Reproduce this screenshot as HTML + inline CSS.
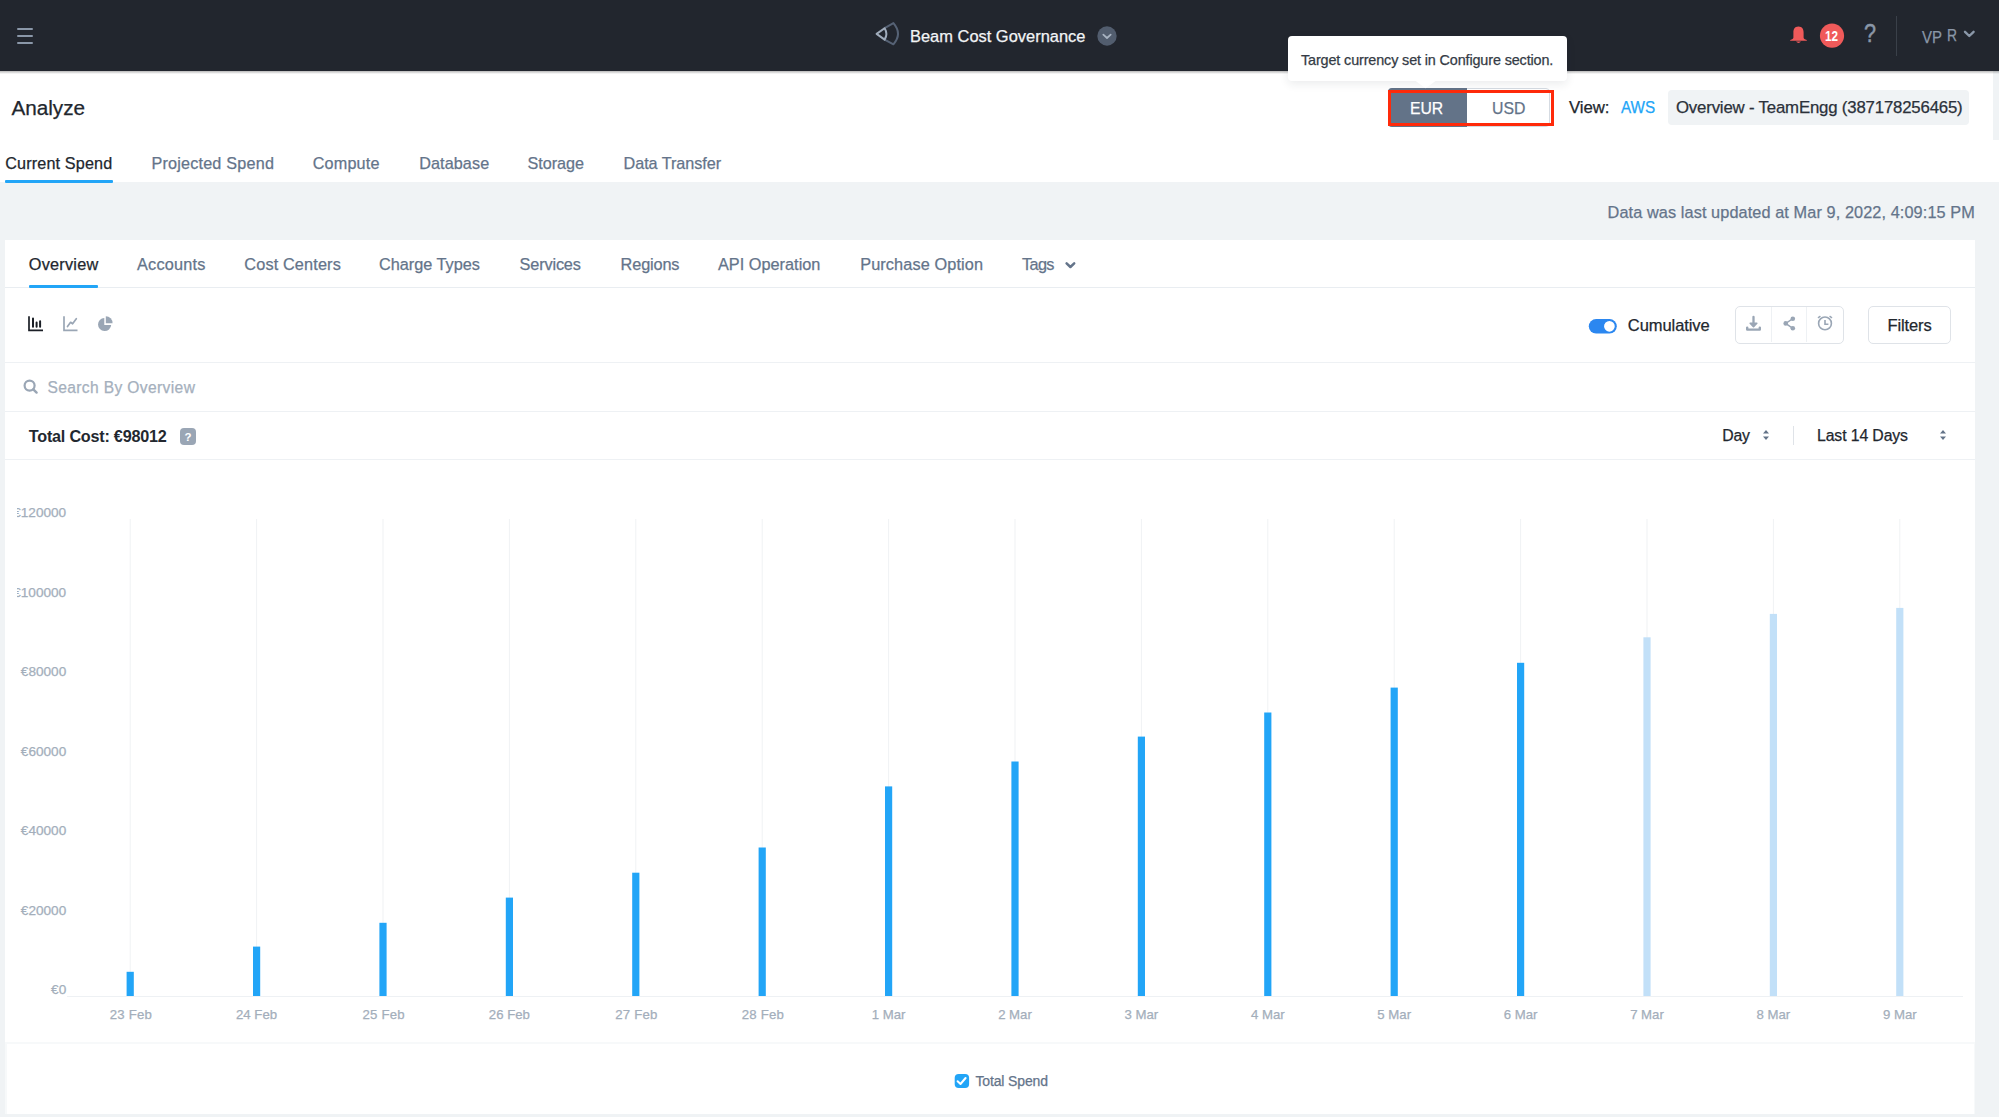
<!DOCTYPE html><html><head><meta charset="utf-8"><style>
html,body{margin:0;padding:0;}
body{width:1999px;height:1117px;overflow:hidden;position:relative;background:#f0f3f5;font-family:"Liberation Sans",sans-serif;}
.t{position:absolute;white-space:nowrap;-webkit-text-stroke:0.25px currentColor;}
.b{position:absolute;}
svg{position:absolute;overflow:visible;}
</style></head><body>
<div class="b" style="left:0px;top:0px;width:1999px;height:71px;background:#22262e;"></div>
<div class="b" style="left:17px;top:27.6px;width:16px;height:2px;background:#8a97a8;border-radius:1px;"></div>
<div class="b" style="left:17px;top:34.7px;width:16px;height:2px;background:#8a97a8;border-radius:1px;"></div>
<div class="b" style="left:17px;top:42px;width:16px;height:2px;background:#8a97a8;border-radius:1px;"></div>
<svg style="left:870px;top:18px" width="35" height="32" viewBox="0 0 35 32">
<path d="M14.6 10.2 L23.4 5.1 Q32.6 15.7 23.4 26.3 L14.6 21.6" fill="none" stroke="#566275" stroke-width="2" stroke-linejoin="round" stroke-linecap="round"/>
<path d="M6.6 15.9 L14.6 10.2 Q18.2 15.9 14.6 21.6 Z" fill="none" stroke="#a0acbb" stroke-width="2" stroke-linejoin="round"/>
</svg>
<div class="t" style="left:910.00px;top:28.07px;font-size:16.46px;line-height:16.46px;color:#f2f4f6;">Beam Cost Governance</div>
<svg style="left:1097px;top:26px" width="20" height="20" viewBox="0 0 20 20">
<circle cx="10" cy="10" r="9.7" fill="#525d6e"/>
<path d="M6.3 8.6 L10 12 L13.7 8.6" fill="none" stroke="#a9b4c2" stroke-width="1.7" stroke-linecap="round" stroke-linejoin="round"/>
</svg>
<svg style="left:1789px;top:26px" width="19" height="19" viewBox="0 0 19 19">
<path d="M9.4 0.6 C5.6 0.6 4.4 3.6 4.4 6.5 L4.4 11.6 Q4.4 13.4 1.2 13.9 L1.2 14.8 L17.8 14.8 L17.8 13.9 Q14.6 13.4 14.6 11.6 L14.6 6.5 C14.6 3.6 13.3 0.6 9.4 0.6 Z" fill="#f05a5a"/>
<path d="M7 15.6 Q9.5 18.2 12 15.6 Z" fill="#f05a5a"/>
</svg>
<svg style="left:1819px;top:23px" width="26" height="26" viewBox="0 0 26 26">
<circle cx="13" cy="12.7" r="12.1" fill="#f05a5a"/></svg>
<div class="t" style="left:1824.80px;top:30.22px;font-size:13.91px;line-height:13.91px;color:#ffffff;font-weight:bold;-webkit-text-stroke:0;transform:scaleX(0.8418);transform-origin:0.00px 0;">12</div>
<div class="t" style="left:1864.00px;top:21.03px;font-size:25.36px;line-height:25.36px;color:#8a97a8;-webkit-text-stroke:0.5px #8a97a8;transform:scaleX(0.8525);transform-origin:0.00px 0;">?</div>
<div class="b" style="left:1896px;top:16px;width:1px;height:40px;background:#3a4049;"></div>
<div class="t" style="left:1921.80px;top:29.57px;font-size:16.81px;line-height:16.81px;color:#8a97a8;transform:scaleX(0.8911);transform-origin:0.00px 0;">VP</div>
<div class="t" style="left:1946.50px;top:28.37px;font-size:16.81px;line-height:16.81px;color:#8a97a8;transform:scaleX(0.8261);transform-origin:0.00px 0;">R</div>
<svg style="left:1963px;top:30px" width="13" height="8" viewBox="0 0 13 8">
<path d="M2 1.8 L6.3 6 L10.6 1.8" fill="none" stroke="#8a97a8" stroke-width="2.4" stroke-linecap="round" stroke-linejoin="round"/></svg>
<div class="b" style="left:0px;top:71px;width:1999px;height:111px;background:#ffffff;"></div>
<div class="b" style="left:1993px;top:71px;width:6px;height:69px;background:#f0f3f5;"></div>
<div class="b" style="left:0px;top:71px;width:1999px;height:2.5px;background:linear-gradient(rgba(0,0,0,0.28),rgba(0,0,0,0));"></div>
<div class="t" style="left:11.40px;top:98.45px;font-size:20.73px;line-height:20.73px;color:#22272e;">Analyze</div>
<div class="t" style="left:5.30px;top:154.99px;font-size:16.20px;line-height:16.20px;color:#22272e;letter-spacing:0.135px;">Current Spend</div>
<div class="t" style="left:151.40px;top:154.99px;font-size:16.20px;line-height:16.20px;color:#64748a;letter-spacing:0.200px;">Projected Spend</div>
<div class="t" style="left:312.70px;top:154.99px;font-size:16.20px;line-height:16.20px;color:#64748a;letter-spacing:0.188px;">Compute</div>
<div class="t" style="left:419.20px;top:154.99px;font-size:16.20px;line-height:16.20px;color:#64748a;letter-spacing:0.095px;">Database</div>
<div class="t" style="left:527.40px;top:154.99px;font-size:16.20px;line-height:16.20px;color:#64748a;">Storage</div>
<div class="t" style="left:623.50px;top:154.99px;font-size:16.20px;line-height:16.20px;color:#64748a;letter-spacing:-0.031px;">Data Transfer</div>
<div class="b" style="left:5px;top:180px;width:108px;height:2.5px;background:#22a5f7;border-radius:1px;"></div>
<div class="b" style="left:1388px;top:87.5px;width:161.5px;height:39.5px;background:#ffffff;border:1px solid #d5dbe2;border-radius:4px;box-sizing:border-box;"></div>
<div class="b" style="left:1388px;top:87.5px;width:79px;height:39.5px;background:#637388;border-radius:4px 0 0 4px;"></div>
<div class="t" style="left:1410.30px;top:99.94px;font-size:16.38px;line-height:16.38px;color:#ffffff;transform:scaleX(0.9608);transform-origin:0.00px 0;">EUR</div>
<div class="t" style="left:1491.60px;top:100.44px;font-size:16.38px;line-height:16.38px;color:#637388;transform:scaleX(0.9666);transform-origin:0.00px 0;">USD</div>
<div class="b" style="left:1388px;top:90px;width:165.5px;height:36px;background:transparent;border:3px solid #ff2a0a;box-sizing:border-box;"></div>
<div class="t" style="left:1569.00px;top:99.78px;font-size:16.80px;line-height:16.80px;color:#22272e;letter-spacing:-0.060px;">View:</div>
<div class="t" style="left:1621.40px;top:99.26px;font-size:16.23px;line-height:16.23px;color:#22a5f7;transform:scaleX(0.9406);transform-origin:0.00px 0;">AWS</div>
<div class="b" style="left:1668.4px;top:90px;width:300.6px;height:34.5px;background:#f0f3f5;border-radius:4px;"></div>
<div class="t" style="left:1676.00px;top:99.78px;font-size:16.80px;line-height:16.80px;color:#2b313a;letter-spacing:-0.179px;">Overview - TeamEngg (387178256465)</div>
<div class="b" style="left:1287.5px;top:36px;width:279px;height:45px;background:#ffffff;border-radius:4px;box-shadow:0 3px 10px rgba(30,40,55,0.09);"></div>
<svg style="left:1415px;top:80px" width="22" height="10" viewBox="0 0 22 10">
<path d="M0 0.5 L10.6 8.2 L21.2 0.5 Z" fill="#ffffff"/></svg>
<div class="t" style="left:1301.00px;top:52.61px;font-size:14.40px;line-height:14.40px;color:#343b45;letter-spacing:-0.131px;">Target currency set in Configure section.</div>
<div class="t" style="left:1607.60px;top:204.30px;font-size:16.30px;line-height:16.30px;color:#64748a;letter-spacing:0.091px;">Data was last updated at Mar 9, 2022, 4:09:15 PM</div>
<div class="b" style="left:5px;top:240px;width:1970px;height:874px;background:#ffffff;"></div>
<div class="t" style="left:28.80px;top:256.20px;font-size:16.30px;line-height:16.30px;color:#22272e;letter-spacing:0.218px;">Overview</div>
<div class="t" style="left:137.00px;top:256.20px;font-size:16.30px;line-height:16.30px;color:#64748a;letter-spacing:0.204px;">Accounts</div>
<div class="t" style="left:244.30px;top:256.20px;font-size:16.30px;line-height:16.30px;color:#64748a;letter-spacing:0.135px;">Cost Centers</div>
<div class="t" style="left:378.90px;top:256.20px;font-size:16.30px;line-height:16.30px;color:#64748a;">Charge Types</div>
<div class="t" style="left:519.60px;top:256.20px;font-size:16.30px;line-height:16.30px;color:#64748a;letter-spacing:-0.159px;">Services</div>
<div class="t" style="left:620.60px;top:256.20px;font-size:16.30px;line-height:16.30px;color:#64748a;letter-spacing:-0.137px;">Regions</div>
<div class="t" style="left:718.00px;top:256.20px;font-size:16.30px;line-height:16.30px;color:#64748a;letter-spacing:0.011px;">API Operation</div>
<div class="t" style="left:860.20px;top:256.20px;font-size:16.30px;line-height:16.30px;color:#64748a;letter-spacing:0.112px;">Purchase Option</div>
<div class="t" style="left:1021.90px;top:256.20px;font-size:16.30px;line-height:16.30px;color:#64748a;letter-spacing:-0.598px;">Tags</div>
<svg style="left:1064px;top:260px" width="13" height="9" viewBox="0 0 13 9">
<path d="M2.6 3.3 L6.4 7 L10.2 3.3" fill="none" stroke="#64748a" stroke-width="2.5" stroke-linecap="round" stroke-linejoin="round"/></svg>
<div class="b" style="left:5px;top:287px;width:1970px;height:1px;background:#e9edf1;"></div>
<div class="b" style="left:28.8px;top:285px;width:69.5px;height:2.5px;background:#22a5f7;border-radius:1px;"></div>
<svg style="left:28px;top:316px" width="16" height="16" viewBox="0 0 16 16">
<path d="M1 0.3 V14.4 H15" fill="none" stroke="#1b1f26" stroke-width="1.7"/>
<path d="M5 2.6 V10.8 M8.6 6.6 V10.8 M12.1 5.2 V10.8" stroke="#1b1f26" stroke-width="2" stroke-linecap="round"/>
</svg>
<svg style="left:63px;top:316px" width="16" height="16" viewBox="0 0 16 16">
<path d="M1 0.3 V14.4 H14.5" fill="none" stroke="#9aa6b5" stroke-width="1.7"/>
<path d="M4.5 10.5 L7.6 6.3 L9.6 7.8 L13.3 2.7" fill="none" stroke="#9aa6b5" stroke-width="1.7" stroke-linecap="round" stroke-linejoin="round"/>
</svg>
<svg style="left:97.6px;top:316px" width="16" height="16" viewBox="0 0 16 16">
<path d="M6.3 1.9 A6.6 6.6 0 1 0 13.2 9 L6.3 9 Z" fill="#9aa6b5"/>
<path d="M7.8 0.2 A6.9 6.9 0 0 1 14.5 7.3 L7.8 7.3 Z" fill="#9aa6b5"/>
</svg>
<svg style="left:1588px;top:318px" width="30" height="17" viewBox="0 0 30 17">
<rect x="0.8" y="1" width="28" height="14.6" rx="7.3" fill="#2b87f0"/>
<circle cx="21.4" cy="8.3" r="6" fill="#ffffff" stroke="#2b87f0" stroke-width="1.3"/>
</svg>
<div class="t" style="left:1627.80px;top:317.03px;font-size:16.50px;line-height:16.50px;color:#22272e;letter-spacing:-0.067px;">Cumulative</div>
<div class="b" style="left:1734.7px;top:305.5px;width:109.3px;height:38px;background:#ffffff;border:1.5px solid #dfe3e8;border-radius:5px;box-sizing:border-box;"></div>
<div class="b" style="left:1770.5px;top:307px;width:1.2px;height:35px;background:#eef1f4;"></div>
<div class="b" style="left:1806.3px;top:307px;width:1.2px;height:35px;background:#eef1f4;"></div>
<svg style="left:1744px;top:314px" width="20" height="20" viewBox="0 0 20 20">
<path d="M9.5 3 V11.5" stroke="#9aa6b5" stroke-width="2.3" stroke-linecap="round"/>
<path d="M6.2 9.2 L9.5 12.6 L12.8 9.2 Z" fill="#9aa6b5" stroke="#9aa6b5" stroke-width="1.6" stroke-linecap="round" stroke-linejoin="round"/>
<path d="M3.2 13.6 V15.6 H15.8 V13.6" fill="none" stroke="#9aa6b5" stroke-width="2.4" stroke-linecap="round" stroke-linejoin="round"/>
</svg>
<svg style="left:1780px;top:313px" width="20" height="20" viewBox="0 0 20 20">
<path d="M12.8 5.7 L5.7 10.4 L12.8 15.3" fill="none" stroke="#9aa6b5" stroke-width="1.4"/>
<circle cx="12.8" cy="5.7" r="2.3" fill="#9aa6b5"/><circle cx="5.7" cy="10.4" r="2.3" fill="#9aa6b5"/><circle cx="12.8" cy="15.3" r="2.3" fill="#9aa6b5"/>
</svg>
<svg style="left:1815px;top:313px" width="20" height="20" viewBox="0 0 20 20">
<circle cx="10" cy="10.4" r="6.4" fill="none" stroke="#9aa6b5" stroke-width="1.6"/>
<path d="M10 7 V11.2 H13.4" fill="none" stroke="#9aa6b5" stroke-width="1.6"/>
<path d="M3.4 4.6 L5 3.4 M16.6 4.6 L15 3.4" stroke="#9aa6b5" stroke-width="1.4" stroke-linecap="round"/>
</svg>
<div class="b" style="left:1868.3px;top:305.5px;width:82.5px;height:38px;background:#ffffff;border:1.5px solid #dfe3e8;border-radius:5px;box-sizing:border-box;"></div>
<div class="t" style="left:1887.60px;top:317.03px;font-size:16.50px;line-height:16.50px;color:#22272e;letter-spacing:-0.130px;">Filters</div>
<div class="b" style="left:5px;top:362px;width:1970px;height:1px;background:#eef1f4;"></div>
<svg style="left:22px;top:378px" width="18" height="18" viewBox="0 0 18 18">
<circle cx="7.6" cy="7.6" r="5" fill="none" stroke="#9aa6b5" stroke-width="2.2"/>
<path d="M11.3 11.3 L14.6 14.6" stroke="#9aa6b5" stroke-width="2.4" stroke-linecap="round"/>
</svg>
<div class="t" style="left:47.40px;top:380.39px;font-size:15.60px;line-height:15.60px;color:#a5b0bd;letter-spacing:0.368px;">Search By Overview</div>
<div class="b" style="left:5px;top:411px;width:1970px;height:1px;background:#eef1f4;"></div>
<div class="t" style="left:28.80px;top:427.79px;font-size:16.20px;line-height:16.20px;color:#23282f;font-weight:bold;-webkit-text-stroke:0;letter-spacing:-0.229px;">Total Cost: €98012</div>
<div class="b" style="left:179.8px;top:428.3px;width:16.2px;height:16.5px;background:#9aa6b5;border-radius:4px;"></div>
<div class="t" style="left:184.50px;top:431.79px;font-size:11.48px;line-height:11.48px;color:#ffffff;font-weight:bold;-webkit-text-stroke:0;">?</div>
<div class="t" style="left:1722.20px;top:427.53px;font-size:15.80px;line-height:15.80px;color:#22272e;letter-spacing:-0.162px;">Day</div>
<svg style="left:1762px;top:428px" width="8" height="14" viewBox="0 0 8 14">
<path d="M1 5.5 L4 2 L7 5.5 Z M1 8.6 L4 12.1 L7 8.6 Z" fill="#637388"/></svg>
<div class="b" style="left:1792.5px;top:425.5px;width:1.2px;height:19.3px;background:#dfe3e8;"></div>
<div class="t" style="left:1817.00px;top:427.53px;font-size:15.80px;line-height:15.80px;color:#22272e;letter-spacing:-0.108px;">Last 14 Days</div>
<svg style="left:1939px;top:428px" width="8" height="14" viewBox="0 0 8 14">
<path d="M1 5.5 L4 2 L7 5.5 Z M1 8.6 L4 12.1 L7 8.6 Z" fill="#637388"/></svg>
<div class="b" style="left:5px;top:459px;width:1970px;height:1px;background:#eef1f4;"></div>
<svg style="left:0px;top:0px" width="1999" height="1117" viewBox="0 0 1999 1117">
<defs><clipPath id="cp"><rect x="17" y="459" width="1958" height="600"/></clipPath></defs>
<rect x="129.70" y="519.0" width="1" height="477.0" fill="#f0f2f4"/>
<rect x="256.10" y="519.0" width="1" height="477.0" fill="#f0f2f4"/>
<rect x="382.50" y="519.0" width="1" height="477.0" fill="#f0f2f4"/>
<rect x="508.90" y="519.0" width="1" height="477.0" fill="#f0f2f4"/>
<rect x="635.30" y="519.0" width="1" height="477.0" fill="#f0f2f4"/>
<rect x="761.70" y="519.0" width="1" height="477.0" fill="#f0f2f4"/>
<rect x="888.10" y="519.0" width="1" height="477.0" fill="#f0f2f4"/>
<rect x="1014.50" y="519.0" width="1" height="477.0" fill="#f0f2f4"/>
<rect x="1140.90" y="519.0" width="1" height="477.0" fill="#f0f2f4"/>
<rect x="1267.30" y="519.0" width="1" height="477.0" fill="#f0f2f4"/>
<rect x="1393.70" y="519.0" width="1" height="477.0" fill="#f0f2f4"/>
<rect x="1520.10" y="519.0" width="1" height="477.0" fill="#f0f2f4"/>
<rect x="1646.50" y="519.0" width="1" height="477.0" fill="#f0f2f4"/>
<rect x="1772.90" y="519.0" width="1" height="477.0" fill="#f0f2f4"/>
<rect x="1899.30" y="519.0" width="1" height="477.0" fill="#f0f2f4"/>
<rect x="67.0" y="996.0" width="1896.0" height="1" fill="#eef1f4"/>
<rect x="126.60" y="971.8" width="7.2" height="24.2" fill="#22a5f7"/>
<rect x="253.00" y="946.6" width="7.2" height="49.4" fill="#22a5f7"/>
<rect x="379.40" y="922.8" width="7.2" height="73.2" fill="#22a5f7"/>
<rect x="505.80" y="897.6" width="7.2" height="98.4" fill="#22a5f7"/>
<rect x="632.20" y="872.7" width="7.2" height="123.3" fill="#22a5f7"/>
<rect x="758.60" y="847.5" width="7.2" height="148.5" fill="#22a5f7"/>
<rect x="885.00" y="786.4" width="7.2" height="209.6" fill="#22a5f7"/>
<rect x="1011.40" y="761.5" width="7.2" height="234.5" fill="#22a5f7"/>
<rect x="1137.80" y="736.6" width="7.2" height="259.4" fill="#22a5f7"/>
<rect x="1264.20" y="712.5" width="7.2" height="283.5" fill="#22a5f7"/>
<rect x="1390.60" y="687.6" width="7.2" height="308.4" fill="#22a5f7"/>
<rect x="1517.00" y="662.8" width="7.2" height="333.2" fill="#22a5f7"/>
<rect x="1643.40" y="637.3" width="7.2" height="358.7" fill="#c2e0f8"/>
<rect x="1769.80" y="613.9" width="7.2" height="382.1" fill="#c2e0f8"/>
<rect x="1896.20" y="607.9" width="7.2" height="388.1" fill="#c2e0f8"/>
</svg>
<div class="b" style="left:17px;top:480px;width:100px;height:540px;overflow:hidden;">
<div class="t" style="left:-3.77px;top:26.19px;font-size:13.6px;line-height:13.6px;color:#a3aebb;">€120000</div>
<div class="t" style="left:-3.77px;top:105.69px;font-size:13.6px;line-height:13.6px;color:#a3aebb;">€100000</div>
<div class="t" style="left:3.84px;top:185.19px;font-size:13.6px;line-height:13.6px;color:#a3aebb;">€80000</div>
<div class="t" style="left:3.84px;top:264.69px;font-size:13.6px;line-height:13.6px;color:#a3aebb;">€60000</div>
<div class="t" style="left:3.84px;top:344.19px;font-size:13.6px;line-height:13.6px;color:#a3aebb;">€40000</div>
<div class="t" style="left:3.84px;top:423.69px;font-size:13.6px;line-height:13.6px;color:#a3aebb;">€20000</div>
<div class="t" style="left:34.10px;top:503.19px;font-size:13.6px;line-height:13.6px;color:#a3aebb;">€0</div>
</div>
<div class="t" style="left:109.64px;top:1007.63px;font-size:13.20px;line-height:13.20px;color:#a3aebb;letter-spacing:0.224px;">23 Feb</div>
<div class="t" style="left:236.04px;top:1007.63px;font-size:13.20px;line-height:13.20px;color:#a3aebb;">24 Feb</div>
<div class="t" style="left:362.44px;top:1007.63px;font-size:13.20px;line-height:13.20px;color:#a3aebb;letter-spacing:0.224px;">25 Feb</div>
<div class="t" style="left:488.84px;top:1007.63px;font-size:13.20px;line-height:13.20px;color:#a3aebb;">26 Feb</div>
<div class="t" style="left:615.24px;top:1007.63px;font-size:13.20px;line-height:13.20px;color:#a3aebb;letter-spacing:0.224px;">27 Feb</div>
<div class="t" style="left:741.64px;top:1007.63px;font-size:13.20px;line-height:13.20px;color:#a3aebb;letter-spacing:0.224px;">28 Feb</div>
<div class="t" style="left:871.74px;top:1007.63px;font-size:13.20px;line-height:13.20px;color:#a3aebb;">1 Mar</div>
<div class="t" style="left:998.14px;top:1007.63px;font-size:13.20px;line-height:13.20px;color:#a3aebb;">2 Mar</div>
<div class="t" style="left:1124.54px;top:1007.63px;font-size:13.20px;line-height:13.20px;color:#a3aebb;">3 Mar</div>
<div class="t" style="left:1250.94px;top:1007.63px;font-size:13.20px;line-height:13.20px;color:#a3aebb;">4 Mar</div>
<div class="t" style="left:1377.34px;top:1007.63px;font-size:13.20px;line-height:13.20px;color:#a3aebb;">5 Mar</div>
<div class="t" style="left:1503.74px;top:1007.63px;font-size:13.20px;line-height:13.20px;color:#a3aebb;">6 Mar</div>
<div class="t" style="left:1630.14px;top:1007.63px;font-size:13.20px;line-height:13.20px;color:#a3aebb;">7 Mar</div>
<div class="t" style="left:1756.54px;top:1007.63px;font-size:13.20px;line-height:13.20px;color:#a3aebb;">8 Mar</div>
<div class="t" style="left:1882.94px;top:1007.63px;font-size:13.20px;line-height:13.20px;color:#a3aebb;">9 Mar</div>
<div class="b" style="left:5px;top:1042px;width:1970px;height:72px;background:#f7f9fa;"></div>
<div class="b" style="left:6.5px;top:1044px;width:1967.5px;height:69.7px;background:#ffffff;"></div>
<svg style="left:954px;top:1073px" width="16" height="16" viewBox="0 0 16 16">
<rect x="0.7" y="1" width="14.4" height="14.1" rx="4" fill="#22a5f7"/>
<path d="M3.6 8.3 L6.5 11 L11.6 5" fill="none" stroke="#ffffff" stroke-width="2" stroke-linecap="round" stroke-linejoin="round"/>
</svg>
<div class="t" style="left:975.40px;top:1074.15px;font-size:14.00px;line-height:14.00px;color:#64748a;letter-spacing:-0.132px;">Total Spend</div>
</body></html>
